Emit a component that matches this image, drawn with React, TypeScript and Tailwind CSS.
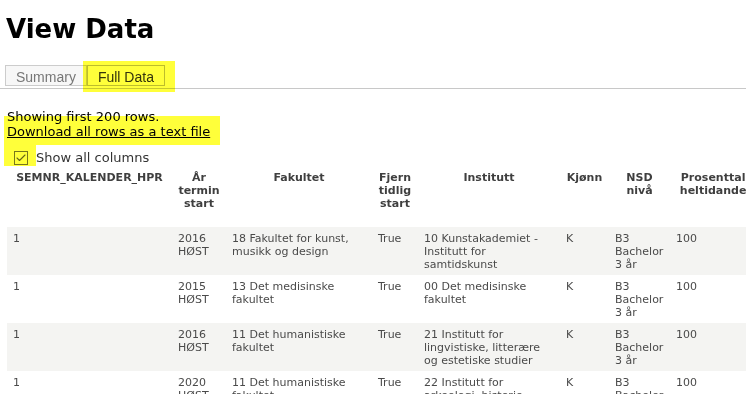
import { Check } from "lucide-react"

const columns = [
    { label: ["SEMNR_KALENDER_HPR"], width: "w-[165px]" },
    { label: ["År", "termin", "start"], width: "w-[54px]" },
    { label: ["Fakultet"], width: "w-[146px]" },
    { label: ["Fjern", "tidlig", "start"], width: "w-[46px]" },
    { label: ["Institutt"], width: "w-[142px]" },
    { label: ["Kjønn"], width: "w-[49px]" },
    { label: ["NSD", "nivå"], width: "w-[61px]" },
    { label: ["Prosenttall", "heltidandel"], width: "w-[90px]" },
]

const rows = [
    ["1", "2016\nHØST", "18 Fakultet for kunst,\nmusikk og design", "True", "10 Kunstakademiet -\nInstitutt for\nsamtidskunst", "K", "B3\nBachelor\n3 år", "100"],
    ["1", "2015\nHØST", "13 Det medisinske\nfakultet", "True", "00 Det medisinske\nfakultet", "K", "B3\nBachelor\n3 år", "100"],
    ["1", "2016\nHØST", "11 Det humanistiske\nfakultet", "True", "21 Institutt for\nlingvistiske, litterære\nog estetiske studier", "K", "B3\nBachelor\n3 år", "100"],
    ["1", "2020\nHØST", "11 Det humanistiske\nfakultet", "True", "22 Institutt for\narkeologi, historie,\nkultur- og religions-", "K", "B3\nBachelor\n3 år", "100"],
]

// yellow marker used on the screenshot annotations
function Highlight({ className }: { className: string }) {
    return <span className={`pointer-events-none absolute bg-[#ffff3a] mix-blend-multiply ${className}`} />
}

export default function App() {
    return (
        <div className="h-screen overflow-hidden bg-white font-['DejaVu_Sans',sans-serif] text-black">
            <h1 className="ml-[6px] pt-[14px] text-[26px] font-bold leading-[30px]">View Data</h1>

            {/* Tabs */}
            <div className="mt-[21px] flex border-b border-[#c8c8c8] pb-[2px] pl-[5px] font-['Liberation_Sans',Arial,sans-serif] text-[14px] leading-[16px]">
                <div className="border border-[#cccccc] bg-[#f7f7f7] px-[10px] pt-[3px] text-[#777777]">Summary</div>
                <div className="relative border border-[#bdbdbd] bg-white px-[10px] pt-[3px] text-[#333333]">
                    Full Data
                    <Highlight className="-left-[5px] -right-[11px] -top-[5px] -bottom-[7px]" />
                </div>
            </div>

            {/* Info */}
            <div className="mt-[20px] pl-[7px] text-[13px] leading-[15px]">
                <p>Showing first 200 rows.</p>
                <p className="relative">
                    <a href="#" className="text-black underline">Download all rows as a text file</a>
                    <Highlight className="-left-[3px] w-[216px] -top-[8px] -bottom-[6px]" />
                </p>
                <label className="relative mt-[10px] flex h-[17px] items-center">
                    <span className="ml-[7px] flex h-[14px] w-[14px] items-center justify-center border border-[#777777] bg-white">
                        <Check className="h-[12px] w-[12px] text-[#666666]" strokeWidth={2.2} />
                    </span>
                    <span className="ml-[8px] text-[13px] text-[#333333]">Show all columns</span>
                    <Highlight className="-left-[3px] w-[32px] -top-[4px] bottom-0" />
                </label>
            </div>

            {/* Table */}
            <div className="ml-[7px] overflow-hidden">
                <table className="w-[753px] table-fixed border-collapse text-[11px] leading-[13px]">
                    <colgroup>
                        {columns.map((c, i) => (
                            <col key={i} className={c.width} />
                        ))}
                    </colgroup>
                    <thead>
                        <tr>
                            {columns.map((c, i) => (
                                <th key={i} className="px-[6px] pb-[17px] pt-[5px] text-center align-top font-bold whitespace-nowrap text-[#3f3f3f]">
                                    {c.label.map((line, j) => (
                                        <div key={j}>{line}</div>
                                    ))}
                                </th>
                            ))}
                        </tr>
                    </thead>
                    <tbody>
                        {rows.map((row, r) => (
                            <tr key={r} className={r % 2 === 0 ? "bg-[#f4f4f2]" : "bg-white"}>
                                {row.map((cell, i) => (
                                    <td key={i} className="px-[6px] pb-[4px] pt-[5px] align-top whitespace-pre text-[#4a4a4a]">
                                        {cell}
                                    </td>
                                ))}
                            </tr>
                        ))}
                    </tbody>
                </table>
            </div>
        </div>
    )
}
